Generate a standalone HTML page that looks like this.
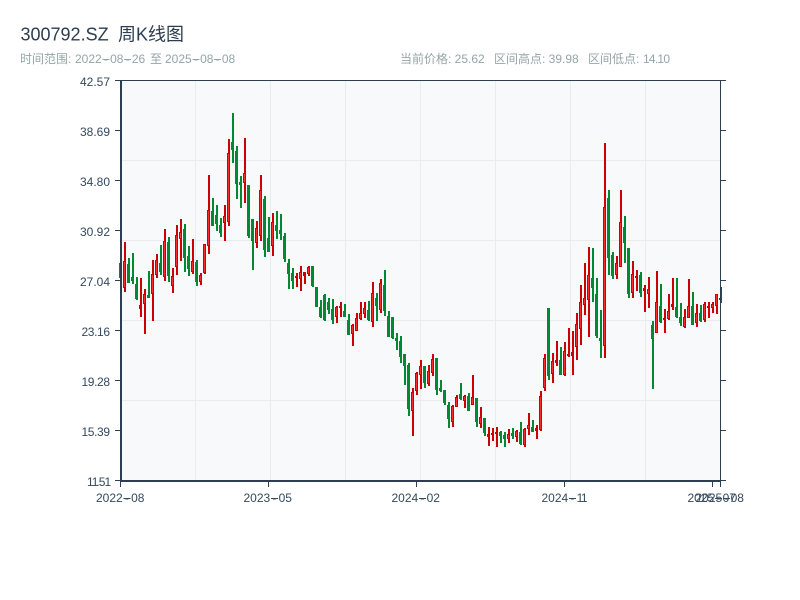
<!DOCTYPE html>
<html lang="zh"><head><meta charset="utf-8"><title>300792.SZ 周K线图</title>
<style>
html,body{margin:0;padding:0;background:#fff;width:800px;height:600px;overflow:hidden}
svg{position:absolute;left:0;top:0}
text{font-family:"Liberation Sans","Noto Sans CJK SC",sans-serif;font-size:12px}
.y{fill:#34495e;text-anchor:end}.x{fill:#34495e}.s{fill:#95a5a6}.t{font-size:18px;fill:#2c3e50}
</style></head><body>
<svg width="800" height="600" viewBox="0 0 800 600" shape-rendering="crispEdges">
<text class="t" x="20.500" y="40.500">300792.SZ</text><text class="t" x="118" y="40.500">周K线图</text>
<text class="s" x="20" y="63">时间范围:</text>
<text class="s" x="75" y="63">2022<tspan dx="2.2">-</tspan><tspan dx="2.2">08</tspan><tspan dx="2.2">-</tspan><tspan dx="2.2">26</tspan></text>
<text class="s" x="150" y="63">至</text>
<text class="s" x="165" y="63">2025<tspan dx="2.2">-</tspan><tspan dx="2.2">08</tspan><tspan dx="2.2">-</tspan><tspan dx="2.2">08</tspan></text>
<path fill="#95a5a6" d="M102.500 59h7v1h-7zM124 59h7v1h-7zM192.500 59h7v1h-7zM214 59h7v1h-7z"/>
<text class="s" x="400" y="63">当前价格: 25.62</text>
<text class="s" x="494" y="63">区间高点: 39.98</text>
<text class="s" x="588" y="63">区间低点:</text><text class="s" x="643" y="63" textLength="27">14.10</text>
<rect x="121" y="81" width="600" height="400" fill="#f8f9fa"/>
<path fill="none" stroke="#e9ecef" stroke-width="1" d="M121 160.5H720M121 240.5H720M121 320.5H720M121 400.5H720M195.5 81V480M270.5 81V480M345.5 81V480M420.5 81V480M495.5 81V480M570.5 81V480M645.5 81V480"/>
<g fill="none">
<path stroke="#008833" stroke-width="2" d="M121 260V280M129 258V283M133 253V284M137 277V300M149 271V298M161 245V275M169 237V282M185 224V272M189 246V276M197 260V286M213 198V226M217 205V231M221 218V237M233 113V163M237 146V199M241 176V208M249 185V238M253 219V270M265 196V257M269 217V252M277 211V239M281 214V240M285 233V262M289 259V289M293 268V289M313 266V287M317 287V307M321 300V318M325 294V321M329 298V314M333 299V324M345 304V317M349 314V335M369 301V321M377 293V321M385 270V316M389 311V337M393 317V339M397 333V350M401 336V363M405 354V385M409 363V416M425 366V388M437 358V395M441 380V392M445 390V405M449 402V428M461 383V400M469 393V411M477 398V427M485 418V436M501 431V443M505 432V447M513 428V439M521 422V445M533 420V432M549 308V380M561 347V375M593 248V302M597 278V338M601 310V358M609 190V275M613 252V279M625 216V263M629 248V298M641 272V297M653 321V389M661 284V323M677 278V318M681 303V326M693 292V325M701 305V322"/>
<path stroke="#008833" stroke-width="3" d="M120.500 263V278M128.500 264V283M132.500 277V281M136.500 284V299M148.500 295V298M160.500 263V272M168.500 242V276M184.500 229V258M188.500 256V269M196.500 262V282M212.500 211V226M216.500 215V224M220.500 225V233M232.500 142V150M236.500 151V184M240.500 182V185M248.500 185V236M252.500 219V241M264.500 199V250M268.500 238V252M276.500 225V231M280.500 230V234M284.500 236V259M288.500 263V274M292.500 273V281M312.500 266V286M316.500 287V307M320.500 307V317M324.500 295V320M328.500 302V310M332.500 309V320M344.500 311V317M348.500 320V335M368.500 310V320M376.500 298V306M384.500 285V311M388.500 316V337M392.500 317V338M396.500 338V341M400.500 341V357M404.500 354V366M408.500 365V409M424.500 366V383M436.500 358V390M440.500 388V391M444.500 390V403M448.500 405V419M460.500 394V399M468.500 396V411M476.500 398V422M484.500 418V433M500.500 432V436M504.500 435V439M512.500 433V436M520.500 432V444M532.500 427V432M548.500 308V376M560.500 360V375M592.500 278V288M596.500 294V336M600.500 338V341M608.500 198V258M612.500 255V276M624.500 227V243M628.500 248V294M640.500 275V293M652.500 325V339M660.500 306V322M676.500 307V317M680.500 317V323M692.500 306V325M700.500 313V321"/>
<path stroke="#cc0000" stroke-width="2" d="M125 242V292M141 278V317M145 289V334M153 260V321M157 254V278M165 229V281M173 268V293M177 225V275M181 219V261M193 239V274M201 273V285M205 244V274M209 175V254M225 205V241M229 139V226M245 138V203M257 221V248M261 175V241M273 213V256M297 273V287M301 266V291M305 272V284M309 266V276M337 306V323M341 302V317M353 324V346M357 313V331M361 302V320M365 302V318M373 282V327M381 279V313M413 388V436M417 372V395M421 360V389M429 365V386M433 354V376M453 405V427M457 395V407M465 395V408M473 375V405M481 407V428M489 427V446M493 428V441M497 427V447M509 429V443M517 430V442M525 428V447M529 413V435M537 425V439M541 391V431M545 354V391M553 353V383M557 341V366M565 342V376M569 328V357M573 331V375M577 313V360M581 285V345M585 263V315M589 247V337M605 143V358M617 256V279M621 190V267M633 261V298M637 270V291M645 285V312M649 277V308M657 271V333M665 309V333M669 294V320M673 278V310M685 309V328M689 279V318M697 304V327M705 302V322M709 302V318M713 302V313M717 294V314M721 287V303"/>
<path stroke="#cc0000" stroke-width="3" d="M124.500 261V288M140.500 305V309M144.500 294V304M152.500 274V294M156.500 260V275M164.500 241V277M172.500 276V286M176.500 235V267M180.500 232V239M192.500 261V272M200.500 275V282M204.500 244V273M208.500 210V246M224.500 216V223M228.500 153V222M244.500 173V183M256.500 228V243M260.500 190V236M272.500 222V246M296.500 276V278M300.500 272V279M304.500 272V276M308.500 267V274M336.500 307V317M340.500 306V308M352.500 325V334M356.500 318V331M360.500 313V319M364.500 308V314M372.500 293V322M380.500 283V310M412.500 392V411M416.500 373V391M420.500 366V375M428.500 371V384M432.500 359V373M452.500 406V422M456.500 397V407M464.500 396V401M472.500 397V405M480.500 417V424M488.500 434V437M492.500 433V435M496.500 432V434M508.500 434V439M516.500 431V437M524.500 429V445M528.500 425V429M536.500 428V431M540.500 396V430M544.500 358V388M552.500 361V374M556.500 360V363M564.500 351V375M568.500 354V356M572.500 352V356M576.500 324V347M580.500 302V329M584.500 298V305M588.500 275V300M604.500 207V346M616.500 263V275M620.500 222V267M632.500 274V293M636.500 276V278M644.500 288V291M648.500 289V294M656.500 302V333M664.500 318V320M668.500 311V319M672.500 304V307M684.500 317V327M688.500 306V318M696.500 313V323M704.500 304V320M708.500 306V308M712.500 304V308M716.500 294V306M720.500 298V300"/>
<path stroke="#ff2a2a" stroke-width="1" d="M124.500 262V287M144.500 295V303M152.500 275V293M156.500 261V274M164.500 242V276M172.500 277V285M176.500 236V266M180.500 233V238M192.500 262V271M200.500 276V281M204.500 245V272M208.500 211V245M224.500 217V222M228.500 154V221M244.500 174V182M256.500 229V242M260.500 191V235M272.500 223V245M300.500 273V278M308.500 268V273M336.500 308V316M352.500 326V333M356.500 319V330M360.500 314V318M364.500 309V313M372.500 294V321M380.500 284V309M412.500 393V410M416.500 374V390M420.500 367V374M428.500 372V383M432.500 360V372M452.500 407V421M456.500 398V406M464.500 397V400M472.500 398V404M480.500 418V423M508.500 435V438M516.500 432V436M524.500 430V444M528.500 426V428M540.500 397V429M544.500 359V387M552.500 362V373M564.500 352V374M576.500 325V346M580.500 303V328M584.500 299V304M588.500 276V299M604.500 208V345M616.500 264V274M620.500 223V266M632.500 275V292M648.500 290V293M656.500 303V332M668.500 312V318M684.500 318V326M688.500 307V317M696.500 314V322M704.500 305V319M712.500 305V307M716.500 295V305"/>
</g>
<path fill="none" stroke="#2c3e50" stroke-width="1" d="M121 80.500H721M720.500 80V482M115 80.500H120M115 130.500H120M115 180.500H120M115 230.500H120M115 280.500H120M115 330.500H120M115 380.500H120M115 430.500H120M115 480.500H120M721 80.500H726M721 130.500H726M721 180.500H726M721 230.500H726M721 280.500H726M721 330.500H726M721 380.500H726M721 430.500H726M721 480.500H726M120.500 482V487M268.500 482V487M416.500 482V487M564.500 482V487M712.500 482V487M720.500 482V487"/>
<path fill="none" stroke="#2c3e50" stroke-width="2" d="M121 80V482M120 481H721"/>
<g>
<text class="y" x="110" y="86">42.57</text><text class="y" x="110" y="136">38.69</text><text class="y" x="110" y="186">34.80</text><text class="y" x="110" y="236">30.92</text><text class="y" x="110" y="286">27.04</text>
<text class="x" x="81.500" y="336" textLength="28.500">23.16</text><text class="x" x="81.500" y="386" textLength="28.500">19.28</text><text class="x" x="81.500" y="436" textLength="28.500">15.39</text><text class="x" y="486"><tspan x="87">1</tspan><tspan x="91.700">1</tspan><tspan x="96.200">.</tspan><tspan x="98.700">5</tspan><tspan x="104.500">1</tspan></text>
<text class="x" x="96" y="502">2022<tspan dx="2.2">-</tspan><tspan dx="2.2">08</tspan></text>
<text class="x" x="243.500" y="502">2023<tspan dx="2.2">-</tspan><tspan dx="2.2">05</tspan></text>
<text class="x" x="391.500" y="502">2024<tspan dx="2.2">-</tspan><tspan dx="2.2">02</tspan></text>
<text class="x" x="541.500" y="502">2024<tspan dx="2.2">-</tspan><tspan dx="2.2" letter-spacing="-1.5">11</tspan></text>
<text class="x" x="687.500" y="502">2025<tspan dx="2.2">-</tspan><tspan dx="2.2">07</tspan></text>
<text class="x" x="695.500" y="502">2025<tspan dx="2.2">-</tspan><tspan dx="2.2">08</tspan></text>
<path fill="#34495e" d="M123.500 498h7v1h-7zM271 498h7v1h-7zM419 498h7v1h-7zM569 498h7v1h-7zM715 498h7v1h-7zM723 498h7v1h-7z"/>
</g>
</svg>
</body></html>
